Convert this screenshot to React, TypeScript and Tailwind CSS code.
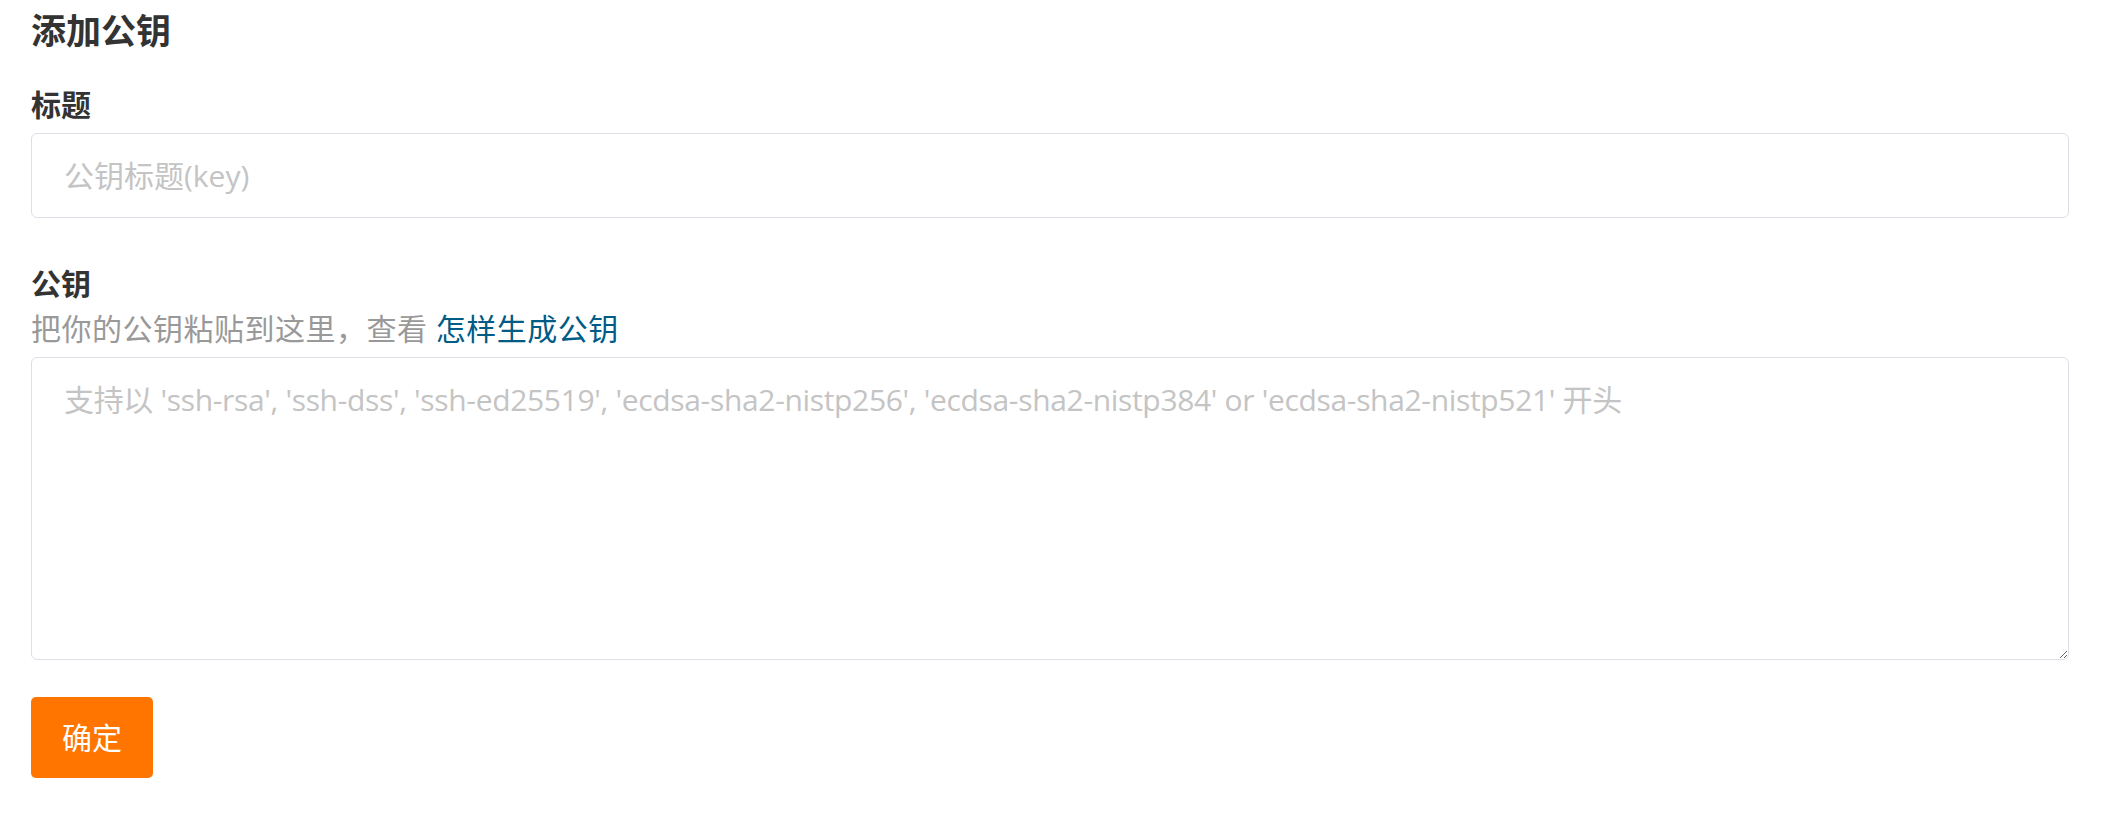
import React, { useState } from 'react'

const FONT = "font-['Open_Sans','Noto_Sans_CJK_SC',sans-serif]"

export default function App() {
  const [title, setTitle] = useState('')
  const [key, setKey] = useState('')

  return (
    <div className={`min-h-screen bg-white pl-[31px] pr-[39px] pt-[5px] text-[#333] ${FONT}`}>
      <h3 className="text-[35px] font-bold leading-[52px]">添加公钥</h3>

      {/* title field */}
      <div className="mt-[25px]">
        <label className="block text-[30px] font-bold leading-[45px]">标题</label>
        <input
          value={title}
          onChange={e => setTitle(e.target.value)}
          placeholder="公钥标题(key)"
          className="mt-[6px] block h-[85px] w-full rounded-[6px] border-[1.5px] border-[#dcdfe6] px-[32px] text-[30px] text-[#333] outline-none placeholder:text-[#c4c4c4]"
        />
      </div>

      {/* key field */}
      <div className="mt-[43px]">
        <label className="block text-[30px] font-bold leading-[45px]">公钥</label>
        <p className="text-[30px] leading-[45px] tracking-[0.5px] text-[#999]">
          把你的公钥粘贴到这里，查看 <a href="#" className="text-[#005b85]">怎样生成公钥</a>
        </p>
        <textarea
          value={key}
          onChange={e => setKey(e.target.value)}
          placeholder="支持以 'ssh-rsa', 'ssh-dss', 'ssh-ed25519', 'ecdsa-sha2-nistp256', 'ecdsa-sha2-nistp384' or 'ecdsa-sha2-nistp521' 开头"
          className="mt-[6px] block h-[303px] w-full rounded-[6px] border-[1.5px] border-[#dcdfe6] px-[32px] pt-[19px] text-[30px] leading-[45px] tracking-[-0.33px] text-[#333] outline-none placeholder:text-[#c4c4c4]"
        />
      </div>

      <button className="mt-[37px] h-[81px] w-[122px] rounded-[5px] bg-[#ff7500] text-[30px] text-white">
        确定
      </button>
    </div>
  )
}
